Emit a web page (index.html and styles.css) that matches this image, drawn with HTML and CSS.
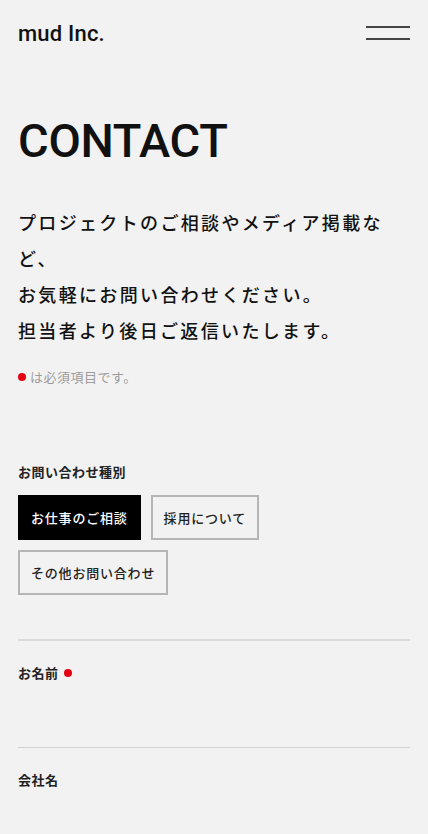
FILE: index.html
```html
<!DOCTYPE html>
<html lang="ja">
<head>
    <meta charset="UTF-8">
    <meta name="viewport" content="width=device-width, initial-scale=1.0">
    <title>Contact | mud Inc.</title>
    <link rel="stylesheet" href="styles.css">
</head>
<body>
    <header class="site-header">
        <a class="logo" href="#">mud Inc.</a>
        <button class="menu-btn" aria-label="メニュー">
            <span></span>
            <span></span>
        </button>
    </header>

    <main class="contact">
        <h1 class="page-title">CONTACT</h1>
        <p class="lead">プロジェクトのご相談やメディア掲載など、<br>お気軽にお問い合わせください。<br>担当者より後日ご返信いたします。</p>
        <p class="note"><span class="req"></span>は必須項目です。</p>

        <form class="contact-form">
            <div class="type-group">
                <p class="field-label">お問い合わせ種別</p>
                <div class="type-options">
                    <button type="button" class="type-btn active">お仕事のご相談</button>
                    <button type="button" class="type-btn">採用について</button>
                    <button type="button" class="type-btn">その他お問い合わせ</button>
                </div>
            </div>

            <div class="field first">
                <label class="field-label" for="name">お名前<span class="req"></span></label>
                <input class="field-input" id="name" type="text">
            </div>

            <div class="field">
                <label class="field-label" for="company">会社名</label>
                <input class="field-input" id="company" type="text">
            </div>
        </form>
    </main>
</body>
</html>
```

FILE: styles.css
```css
body {
    margin: 0;
    background: #f2f2f2;
    color: #111;
    font-family: "Noto Sans CJK JP", "Noto Sans", sans-serif;
}
.site-header {
    height: 66px;
    padding: 0 18px;
    display: flex;
    justify-content: space-between;
    align-items: center;
}
.logo {
    font-family: Roboto, "Liberation Sans", sans-serif;
    font-weight: 500;
    font-size: 22px;
    color: #111;
    text-decoration: none;
    letter-spacing: 0.2px;
}
.menu-btn {
    width: 44px;
    height: 14px;
    padding: 0;
    border: none;
    background: none;
    display: flex;
    flex-direction: column;
    justify-content: space-between;
}
.menu-btn span {
    display: block;
    width: 100%;
    height: 2px;
    background: #444;
}
.contact {
    padding: 0 18px 40px;
}
.page-title {
    margin: 51px 0 0;
    font-family: Roboto, "Liberation Sans", sans-serif;
    font-weight: 500;
    font-size: 47px;
    line-height: 1;
    letter-spacing: -0.3px;
}
.lead {
    margin: 40px 0 0;
    font-size: 18px;
    line-height: 36px;
    letter-spacing: 0.13em;
    font-weight: 500;
    color: #111;
}
.note {
    margin: 19px 0 0;
    font-size: 13px;
    line-height: 20px;
    letter-spacing: 0.5px;
    color: #9c9c9c;
    display: flex;
    align-items: center;
}
.req {
    display: inline-block;
    width: 8px;
    height: 8px;
    border-radius: 50%;
    background: #e60012;
    margin-right: 4px;
}
.contact-form {
    margin-top: 75px;
}
.field-label {
    margin: 0;
    display: flex;
    align-items: center;
    font-size: 13px;
    line-height: 20px;
    font-weight: 700;
    letter-spacing: 0.5px;
    color: #222;
}
.field-label .req {
    margin: 0 0 0 5px;
}
.type-options {
    margin-top: 13px;
    display: flex;
    flex-wrap: wrap;
    gap: 10px;
}
.type-btn {
    height: 45px;
    padding: 0 11px;
    border: 2px solid #b5b5b5;
    background: #f2f2f2;
    color: #222;
    font-family: "Noto Sans CJK JP", sans-serif;
    font-size: 13px;
    font-weight: 500;
    letter-spacing: 0.8px;
}
.type-btn.active {
    background: #000;
    border-color: #000;
    color: #fff;
}
.field {
    border-top: 1px solid #d2d2d2;
    padding-top: 22px;
}
.field.first {
    margin-top: 44px;
    border-top: 2px solid #dadada;
}
.field-input {
    display: block;
    width: 100%;
    height: 64px;
    padding: 0;
    border: none;
    background: transparent;
    font-size: 16px;
}
```
